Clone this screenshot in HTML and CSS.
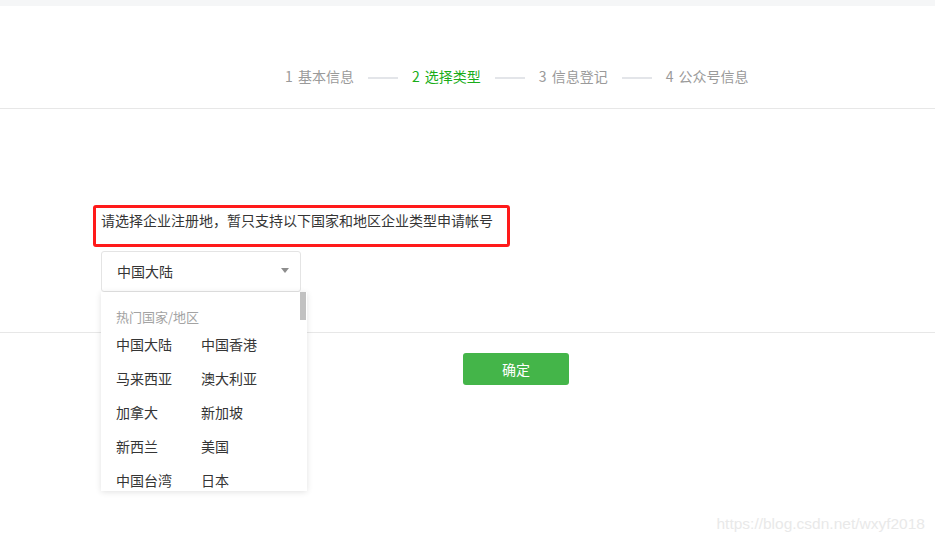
FILE: index.html
```html
<!DOCTYPE html>
<html lang="zh-CN">
<head>
<meta charset="utf-8">
<title>选择类型</title>
<link rel="stylesheet" href="styles.css">
</head>
<body>
<div class="topband"></div>
<header class="header">
  <ol class="steps">
    <li class="step">1 基本信息</li>
    <li class="sep"></li>
    <li class="step active">2 选择类型</li>
    <li class="sep"></li>
    <li class="step">3 信息登记</li>
    <li class="sep"></li>
    <li class="step">4 公众号信息</li>
  </ol>
</header>
<main class="main">
  <section class="form">
    <div class="tip">请选择企业注册地，暂只支持以下国家和地区企业类型申请帐号</div>
    <div class="select-wrap">
      <div class="select">
        <span class="select-value">中国大陆</span>
        <span class="caret"></span>
      </div>
      <div class="dropdown">
        <div class="scrollbar"></div>
        <div class="dd-title">热门国家/地区</div>
        <ul class="dd-list">
          <li>中国大陆</li><li>中国香港</li>
          <li>马来西亚</li><li>澳大利亚</li>
          <li>加拿大</li><li>新加坡</li>
          <li>新西兰</li><li>美国</li>
          <li>中国台湾</li><li>日本</li>
        </ul>
      </div>
    </div>
  </section>
  <div class="actions">
    <button class="btn">确定</button>
  </div>
</main>
<div class="watermark">https://blog.csdn.net/wxyf2018</div>
</body>
</html>
```
FILE: styles.css
```css
* { box-sizing: border-box; }
html, body { margin: 0; padding: 0; }
body {
  width: 935px;
  height: 542px;
  background: #fff;
  font-family: "Microsoft YaHei", "Noto Sans CJK SC", "Noto Sans", sans-serif;
  font-size: 14px;
  color: #353535;
  position: relative;
  overflow: hidden;
}
.topband { height: 6px; background: #f5f6f7; }
.header {
  height: 103px;
  border-bottom: 1px solid #e7e7e7;
  padding-top: 58px;
}
.steps {
  list-style: none;
  margin: 0;
  padding: 0 0 0 285px;
  display: flex;
  align-items: center;
  height: 24px;
}
.step {
  color: #9a9a9a;
  font-size: 14px;
  line-height: 24px;
  white-space: nowrap;
  word-spacing: 2px;
}
.step.active { color: #1aad19; }
.sep {
  width: 30px;
  height: 2px;
  background: #e3e5e9;
  margin: 3px 14px 0 14px;
}
.main { position: relative; }
.form {
  padding: 96px 0 0 93px;
  height: 224px;
  border-bottom: 1px solid #e7e7e7;
}
.tip {
  width: 417px;
  height: 42px;
  border: 3px solid #ff1a1a;
  border-radius: 3px;
  padding: 2px 0 0 5px;
  line-height: 20px;
  color: #353535;
}
.select-wrap {
  position: relative;
  margin: 4px 0 0 8px;
  width: 200px;
}
.select {
  height: 41px;
  border: 1px solid #e4e4e4;
  border-radius: 3px;
  padding: 0 0 2px 15px;
  display: flex;
  align-items: center;
  justify-content: space-between;
  background: #fff;
}
.select-value { line-height: 20px; color: #353535; }
.caret {
  width: 0;
  height: 0;
  border-left: 4px solid transparent;
  border-right: 4px solid transparent;
  border-top: 5px solid #8d8d8d;
  margin-right: 11px;
}
.dropdown {
  position: absolute;
  top: 41px;
  left: 0;
  width: 206px;
  height: 199px;
  background: #fff;
  box-shadow: 0 1px 6px rgba(0,0,0,0.12);
  overflow: hidden;
  z-index: 5;
  padding: 16px 0 0 15px;
}
.scrollbar {
  position: absolute;
  top: 0;
  right: 1px;
  width: 6px;
  height: 28px;
  background: #c1c1c1;
}
.dd-title {
  font-size: 13px;
  color: #a3a3a3;
  line-height: 18px;
}
.dd-list {
  list-style: none;
  margin: 6px 0 0 0;
  padding: 0;
  display: grid;
  grid-template-columns: 85px 85px;
  grid-auto-rows: 34px;
}
.dd-list li {
  line-height: 20px;
  padding-top: 2px;
  color: #353535;
}
.actions {
  display: flex;
  justify-content: flex-start;
  padding: 20px 0 0 463px;
}
.btn {
  width: 106px;
  height: 32px;
  border: 0;
  border-radius: 3px;
  background: #44b549;
  color: #fff;
  font-family: inherit;
  font-size: 14px;
  padding: 0;
}
.watermark {
  position: absolute;
  right: 10px;
  bottom: 9px;
  font-family: "Liberation Sans", Arial, sans-serif;
  font-size: 15.5px;
  color: #e9e9e9;
}
```
